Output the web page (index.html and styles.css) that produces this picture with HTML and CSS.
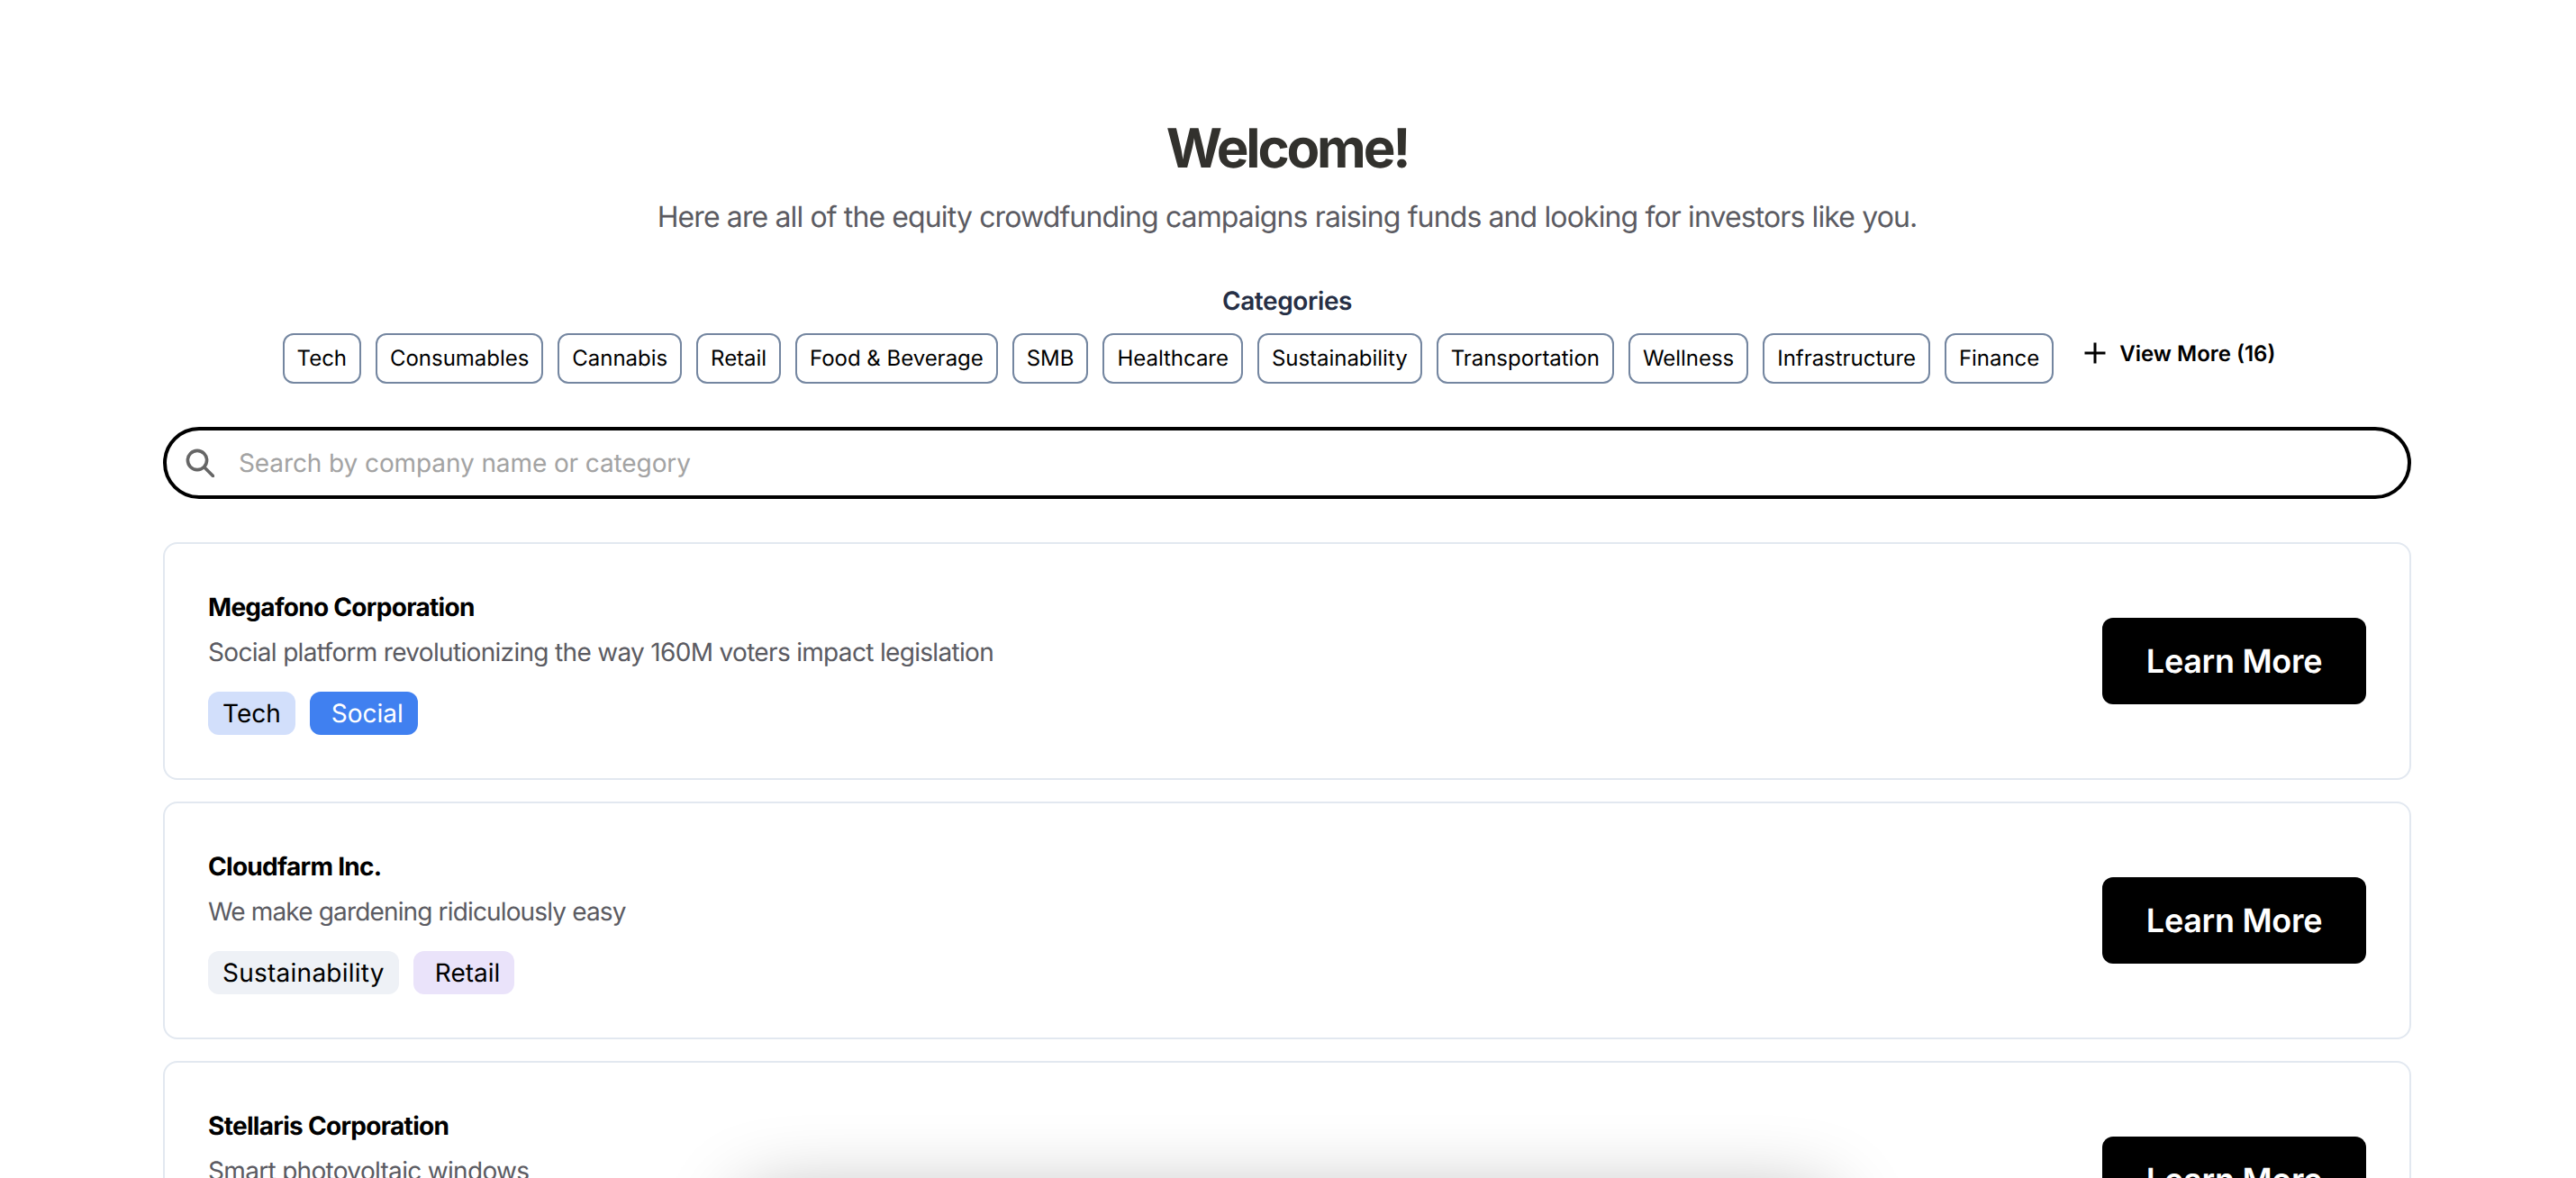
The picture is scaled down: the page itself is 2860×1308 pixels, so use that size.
FILE: index.html
```html
<!DOCTYPE html>
<html lang="en">
<head>
<meta charset="utf-8">
<title>Welcome</title>
<link rel="stylesheet" href="styles.css">
</head>
<body>
<main class="page">
  <header class="intro">
    <h1 class="title">Welcome!</h1>
    <p class="subtitle">Here are all of the equity crowdfunding campaigns raising funds and looking for investors like you.</p>
  </header>
  <section class="categories">
    <h2 class="categories-label">Categories</h2>
    <div class="chips">
      <span class="chip">Tech</span>
      <span class="chip">Consumables</span>
      <span class="chip">Cannabis</span>
      <span class="chip">Retail</span>
      <span class="chip">Food &amp; Beverage</span>
      <span class="chip">SMB</span>
      <span class="chip">Healthcare</span>
      <span class="chip">Sustainability</span>
      <span class="chip">Transportation</span>
      <span class="chip">Wellness</span>
      <span class="chip">Infrastructure</span>
      <span class="chip">Finance</span>
      <button class="view-more" type="button">
        <svg class="plus" viewBox="0 0 24 24" width="24" height="24" aria-hidden="true"><path d="M12 0.5v23M0.5 12h23"/></svg>
        View More (16)
      </button>
    </div>
  </section>
  <label class="search">
    <svg class="search-icon" viewBox="0 0 32 32" width="32" height="32" aria-hidden="true"><circle cx="13" cy="13" r="10.6"/><path d="M21 21l9.5 9.5"/></svg>
    <input class="search-input" type="text" placeholder="Search by company name or category">
  </label>
  <section class="list">
    <article class="card">
      <div class="card-body">
        <h3 class="name">Megafono Corporation</h3>
        <p class="desc">Social platform revolutionizing the way 160M voters impact legislation</p>
        <div class="tags">
          <span class="tag tag-tech">Tech</span>
          <span class="tag tag-social tag-indent">Social</span>
        </div>
      </div>
      <a class="learn" href="#">Learn More</a>
    </article>
    <article class="card">
      <div class="card-body">
        <h3 class="name">Cloudfarm Inc.</h3>
        <p class="desc desc-tight">We make gardening ridiculously easy</p>
        <div class="tags">
          <span class="tag tag-sustain">Sustainability</span>
          <span class="tag tag-retail tag-indent">Retail</span>
        </div>
      </div>
      <a class="learn" href="#">Learn More</a>
    </article>
    <article class="card">
      <div class="card-body">
        <h3 class="name">Stellaris Corporation</h3>
        <p class="desc">Smart photovoltaic windows</p>
        <div class="tags">
          <span class="tag tag-sustain">Sustainability</span>
        </div>
      </div>
      <a class="learn" href="#">Learn More</a>
    </article>
  </section>
</main>
<div class="offscreen-panel" aria-hidden="true"></div>
</body>
</html>
```
FILE: styles.css
```css
* { box-sizing: border-box; }
html, body { margin: 0; height: 100%; overflow: hidden; background: #fff; }
body { padding-right: 2px; font-family: Inter, "Noto Sans", sans-serif; color: #000; text-rendering: geometricPrecision; }
.page { width: 2496px; margin: 0 auto; padding-top: 129px; }
.intro { text-align: center; }
.title { margin: 0; font-size: 60px; line-height: 72px; font-weight: 700; letter-spacing: -3.2px; color: #32312d; }
.subtitle { margin: 16px 0 0; font-size: 32px; line-height: 48px; font-weight: 400; letter-spacing: -0.88px; color: #5b5b62; }
.categories { margin-top: 49px; text-align: center; }
.categories-label { margin: 0; font-size: 28px; line-height: 40px; font-weight: 600; letter-spacing: -0.4px; color: #262f45; }
.chips { margin-top: 16px; display: flex; justify-content: center; align-items: flex-start; gap: 16px; }
.chip { height: 56px; padding: 0 14px 1px; display: flex; align-items: center; border: 2px solid #7486a0; border-radius: 12px; font-size: 24px; letter-spacing: -0.03px; color: #000; white-space: nowrap; }
.view-more { height: 44px; margin: 0 18px; padding: 0; display: flex; align-items: center; gap: 15px; border: 0; background: none; font: 600 24px Inter, sans-serif; color: #000; white-space: nowrap; text-rendering: geometricPrecision; }
.plus { fill: none; stroke: #000; stroke-width: 3; }
.search { margin-top: 48px; height: 80px; padding: 0 21px; display: flex; align-items: center; gap: 27px; border: 4px solid #000; border-radius: 40px; }
.search-icon { flex: none; fill: none; stroke: #666; stroke-width: 3.6; stroke-linecap: round; }
.search-input { flex: 1; border: 0; outline: 0; padding: 0; font: 400 28px Inter, sans-serif; letter-spacing: -0.1px; color: #000; background: none; text-rendering: geometricPrecision; }
.search-input::placeholder { color: #a3a3a3; opacity: 1; }
.list { margin-top: 48px; display: flex; flex-direction: column; gap: 24px; }
.card { height: 264px; padding: 48px; display: flex; align-items: center; justify-content: space-between; border: 2px solid #e2e8f0; border-radius: 16px; flex: none; }
.name { margin: 0; font-size: 28px; line-height: 44px; font-weight: 700; color: #000; letter-spacing: -0.7px; }
.desc { margin: 6px 0 0; font-size: 28px; line-height: 44px; font-weight: 400; letter-spacing: -0.68px; color: #5b5b62; }
.desc-tight { letter-spacing: -0.85px; }
.tags { margin-top: 22px; display: flex; gap: 16px; }
.tag { height: 48px; padding: 0 16px; display: flex; align-items: center; border-radius: 12px; font-size: 28px; color: #000; }
.tag-indent { padding-left: 24px; }
.tag-tech { background: #d2dffb; }
.tag-social { background: #4080f0; color: #fff; }
.tag-sustain { background: #eef1f6; letter-spacing: 0.25px; }
.tag-retail { background: #eae3fa; }
.learn { width: 293px; height: 96px; display: flex; align-items: center; justify-content: center; flex: none; background: #000; color: #fff; border-radius: 12px; font-size: 36px; font-weight: 600; letter-spacing: -0.3px; text-decoration: none; }
.offscreen-panel { position: fixed; left: 50%; top: calc(100% + 24px); width: 1200px; height: 200px; margin-left: -601px; box-shadow: 0 0 90px rgba(0, 0, 0, 0.33); }
```
